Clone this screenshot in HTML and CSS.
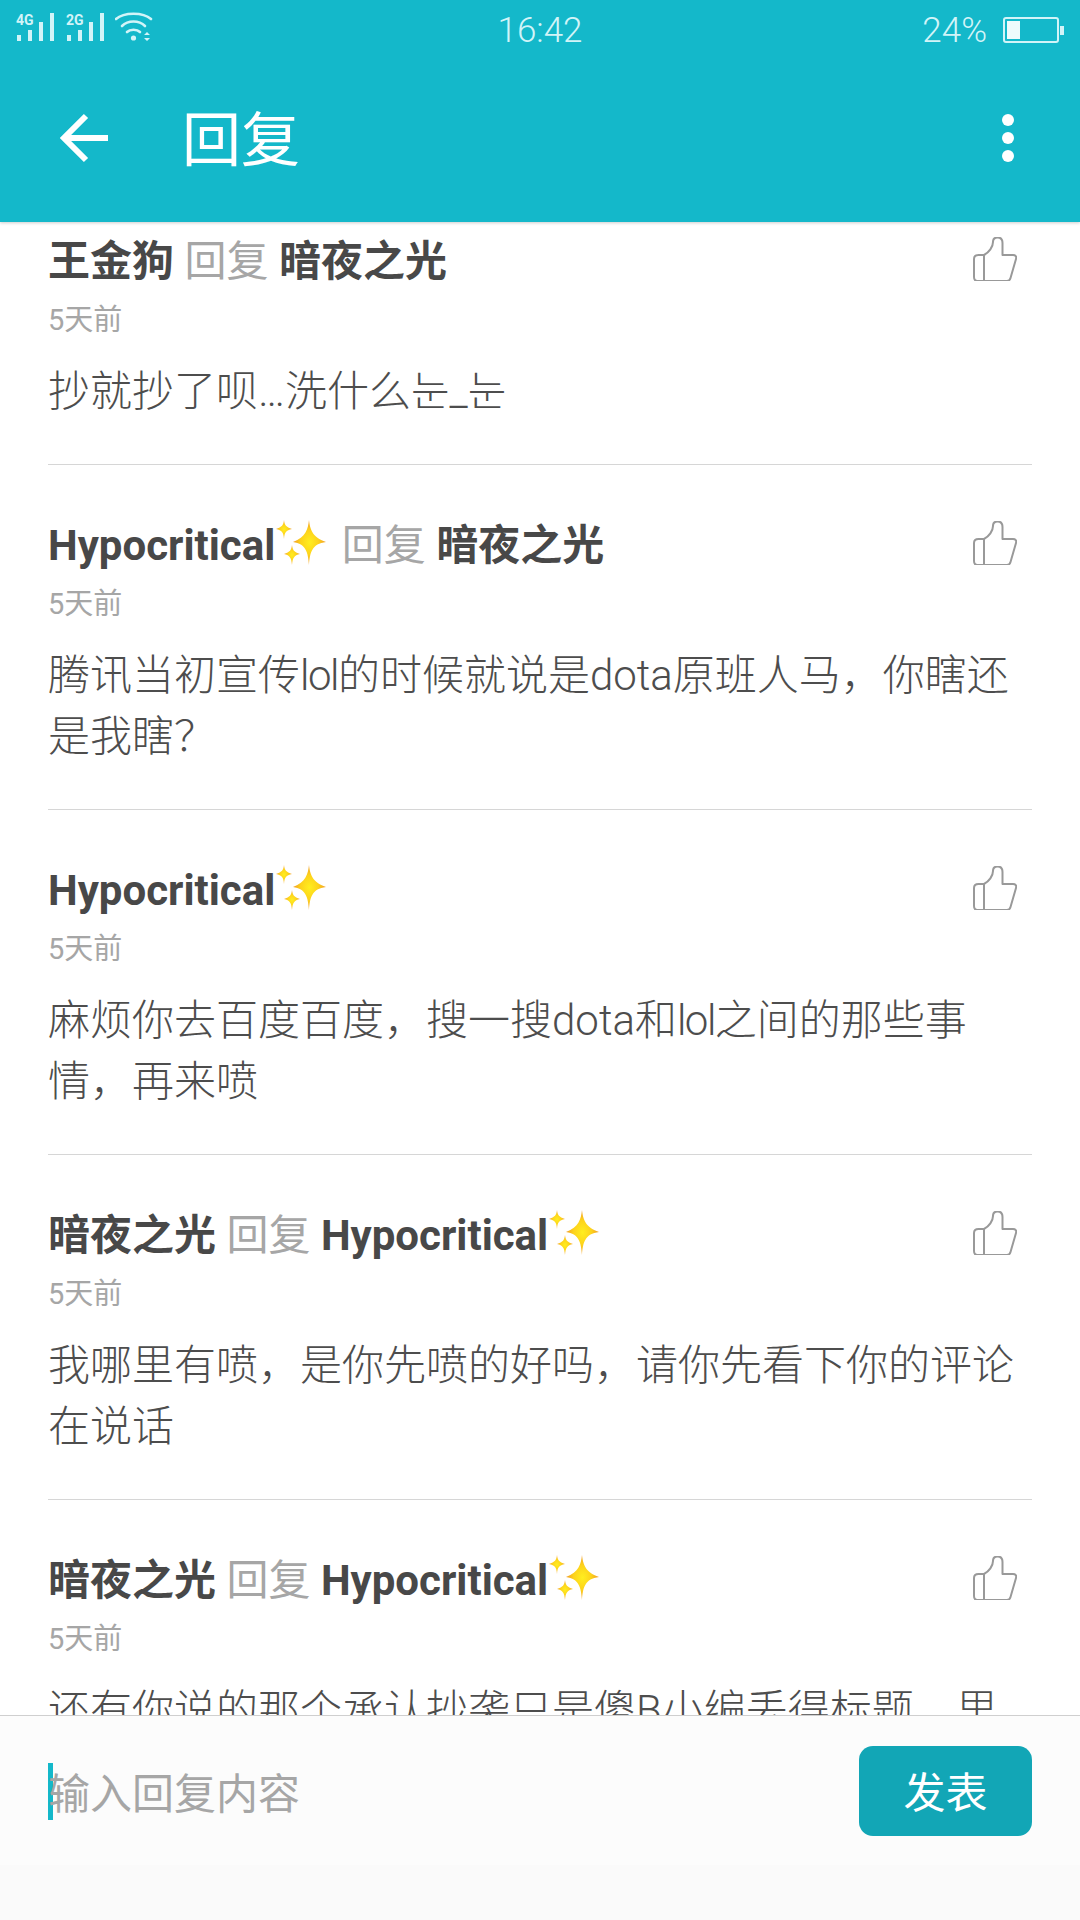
FILE: index.html
```html
<!DOCTYPE html>
<html>
	<head>
		<meta charset="UTF-8">
		<title>回复</title>
		<link rel="stylesheet" href="styles.css">
	</head>
	<body>
		<svg class="defs" width="0" height="0">
			<defs>
				<radialGradient id="gold">
					<stop offset="0" stop-color="#ffee1f"/>
					<stop offset="0.55" stop-color="#fdd21c"/>
					<stop offset="1" stop-color="#f09a24"/>
				</radialGradient>
				<symbol id="sparkle" viewBox="0 0 50 46">
					<path fill="url(#gold)" d="M33 0C34 9 36 17 50 22C36 24 34 32 33 45C32 32 30 24 17 22C30 17 32 9 33 0Z"/>
					<path fill="url(#gold)" d="M8 0C8.500 5 10 7 16 9C10 10.500 8.500 12 8 19C7.500 12 6 10.500 0 9C6 7 7.500 5 8 0Z"/>
					<path fill="url(#gold)" d="M16 25C16.600 30 18 32 24 34C18 35.500 16.600 38 16 45C15.400 38 14 35.500 8 34C14 32 15.400 30 16 25Z"/>
				</symbol>
				<symbol id="thumb" viewBox="0 0 44 44">
					<path fill="none" stroke="#999" stroke-width="2" stroke-linejoin="round" d="M11 18H5.500C3 18 1 19.500 1 22V40C1 42.500 2.500 44 4.500 44H34C36 44 37 43 37.500 41L43 22C43.800 19.500 42.500 18 40 18H29.500V6C29.500 2.500 27.500 0.500 24.500 0.500C21.500 0.500 20 2.500 20 5C20 10 16 15.500 11 18V44"/>
				</symbol>
			</defs>
		</svg>
		<div id="page">
			<div class="header">
				<div class="status">
					<div class="status-left">
						<span class="signal"><i class="net">4G</i>
							<svg width="38" height="28" viewBox="0 0 38 28"><path fill="#d2f4f8" d="M1 22h4v6H1zM12 17h4v11h-4zM23 9h4v19h-4zM34 0h4v28h-4z"/></svg>
						</span>
						<span class="signal"><i class="net">2G</i>
							<svg width="38" height="28" viewBox="0 0 38 28"><path fill="#d2f4f8" d="M1 22h4v6H1zM12 17h4v11h-4zM23 9h4v19h-4zM34 0h4v28h-4z"/></svg>
						</span>
						<svg class="wifi" width="38" height="30" viewBox="0 0 38 30">
							<g fill="none" stroke="#d2f4f8" stroke-width="2.600" stroke-linecap="round">
								<path d="M1 7C9 0 28 0 36 7"/>
								<path d="M7 14C13 8 24 8 30 14"/>
								<path d="M12 20C15 17 22 17 25 20"/>
							</g>
							<circle cx="18.500" cy="26" r="2.600" fill="#d2f4f8"/>
							<path fill="#d2f4f8" d="M32 20l3 3h-6zM32 29l3-3h-6z"/>
						</svg>
					</div>
					<div class="status-time">16:42</div>
					<div class="status-right">
						<span class="pct">24%</span>
						<span class="battery"><span class="battery-level"></span></span>
						<span class="battery-tip"></span>
					</div>
				</div>
				<div class="toolbar">
					<svg class="back" width="50" height="50" viewBox="0 0 50 50">
						<path fill="none" stroke="#fff" stroke-width="6" d="M26 3L4 25L26 47M6 25H48"/>
					</svg>
					<div class="title">回复</div>
					<div class="more"><i></i><i></i><i></i></div>
				</div>
			</div>

			<div class="list">
				<div class="comment">
					<div class="row">
						<div class="name">王金狗 <span class="reply">回复</span> 暗夜之光</div>
						<svg class="like"><use href="#thumb"/></svg>
					</div>
					<div class="time">5天前</div>
					<div class="body">抄就抄了呗…洗什么눈_눈</div>
				</div>
				<div class="comment">
					<div class="row">
						<div class="name">Hypocritical<svg class="spark"><use href="#sparkle"/></svg> <span class="reply">回复</span> 暗夜之光</div>
						<svg class="like"><use href="#thumb"/></svg>
					</div>
					<div class="time">5天前</div>
					<div class="body">腾讯当初宣传<span class="lol">lol</span>的时候就说是dota原班人马，你瞎还是我瞎？</div>
				</div>
				<div class="comment">
					<div class="row">
						<div class="name">Hypocritical<svg class="spark"><use href="#sparkle"/></svg></div>
						<svg class="like"><use href="#thumb"/></svg>
					</div>
					<div class="time">5天前</div>
					<div class="body">麻烦你去百度百度，搜一搜dota和<span class="lol">lol</span>之间的那些事情，再来喷</div>
				</div>
				<div class="comment">
					<div class="row">
						<div class="name">暗夜之光 <span class="reply">回复</span> Hypocritical<svg class="spark"><use href="#sparkle"/></svg></div>
						<svg class="like"><use href="#thumb"/></svg>
					</div>
					<div class="time">5天前</div>
					<div class="body">我哪里有喷，是你先喷的好吗，请你先看下你的评论在说话</div>
				</div>
				<div class="comment">
					<div class="row">
						<div class="name">暗夜之光 <span class="reply">回复</span> Hypocritical<svg class="spark"><use href="#sparkle"/></svg></div>
						<svg class="like"><use href="#thumb"/></svg>
					</div>
					<div class="time">5天前</div>
					<div class="body">还有你说的那个承认抄袭只是傻B小编丢得标题，里面的内容你看了吗</div>
				</div>
			</div>

			<div class="footer">
				<div class="input-bar">
					<div class="input">
						<span class="caret"></span>
						<span class="placeholder">输入回复内容</span>
					</div>
					<div class="send">发表</div>
				</div>
				<div class="nav-space"></div>
			</div>
		</div>
	</body>
</html>
```
FILE: styles.css
```css
*{margin: 0;padding: 0;box-sizing: border-box;}
html,body{width: 1080px;height: 1920px;overflow: hidden;}
body{background: #fff;font-family: Roboto,"Noto Sans CJK SC",sans-serif;}
i{font-style: normal;}
.defs{position: absolute;}
#page{
	width: 1080px;
	height: 1920px;
	display: flex;
	flex-direction: column;
}
.header{
	height: 222px;
	flex-shrink: 0;
	background: #14b8ca;
	box-shadow: 0 1px 3px rgba(0,0,0,0.2);
	position: relative;
	z-index: 2;
}
.status{
	height: 60px;
	display: grid;
	grid-template-columns: 1fr auto 1fr;
	align-items: center;
	color: #d2f4f8;
}
.status-left{
	display: flex;
	align-items: flex-start;
	padding: 13px 0 0 16px;
	height: 60px;
}
.signal{
	width: 38px;
	height: 28px;
	margin-right: 12px;
	position: relative;
	display: block;
}
.signal svg{display: block;}
.net{
	position: absolute;
	left: 0;
	top: 0;
	font-size: 14px;
	line-height: 14px;
	font-weight: 700;
}
.wifi{display: block;margin-left: -1px;margin-top: -1px;}
.status-time{
	font-size: 35px;
	font-weight: 300;
	text-align: center;
}
.status-right{
	display: flex;
	align-items: center;
	justify-content: flex-end;
	padding-right: 16px;
}
.pct{
	font-size: 35px;
	font-weight: 300;
	margin-right: 16px;
}
.battery{
	width: 56px;
	height: 26px;
	border: 2px solid #d2f4f8;
	border-radius: 3px;
	padding: 2px;
	display: block;
}
.battery-level{
	display: block;
	width: 13px;
	height: 100%;
	background: #eefbfc;
}
.battery-tip{
	width: 4px;
	height: 9px;
	background: #d2f4f8;
	margin-left: 1px;
}
.toolbar{
	height: 162px;
	display: flex;
	align-items: center;
	padding-left: 60px;
	padding-right: 66px;
}
.back{
	display: block;
	width: 50px;
	height: 50px;
	margin-bottom: 6px;
}
.title{
	flex: 1;
	margin-left: 72px;
	font-size: 59px;
	line-height: 80px;
	color: #fff;
}
.more{margin-bottom: 6px;}
.more i{
	display: block;
	width: 12px;
	height: 12px;
	border-radius: 50%;
	background: #fff;
	margin: 6px 0;
}
.list{
	flex: 1;
	overflow: hidden;
	min-height: 0;
}
.comment{
	margin: 0 48px;
	padding: 50px 0 42px;
	border-bottom: 1px solid #d6d6d6;
}
.comment:first-child{margin-top: -41px;}
.row{
	height: 60px;
	display: flex;
	align-items: center;
	justify-content: space-between;
}
.name{
	margin-top: 2px;
	font-size: 42px;
	line-height: 60px;
	font-weight: 700;
	color: #484848;
	white-space: nowrap;
}
.reply{
	font-weight: 400;
	color: #a6a6a6;
}
.spark{
	width: 50px;
	height: 46px;
	margin-left: 1px;
	margin-right: 5px;
	vertical-align: -6px;
}
.like{
	width: 44px;
	height: 44px;
	margin-right: 15px;
	margin-bottom: 4px;
	overflow: visible;
}
.time{
	margin-top: 9px;
	height: 40px;
	font-size: 29px;
	line-height: 40px;
	color: #a6a6a6;
}
.body{
	margin-top: 21px;
	font-size: 42px;
	font-weight: 300;
	line-height: 61px;
	color: #4d4d4d;
}
.lol{letter-spacing: -1.5px;}
.footer{
	height: 205px;
	flex-shrink: 0;
	background: #fafafa;
	border-top: 1px solid #cfcfcf;
	position: relative;
	z-index: 2;
}
.input-bar{
	height: 149px;
	background: #fcfcfc;
	display: flex;
	align-items: center;
	justify-content: space-between;
	padding: 30px 48px 29px;
}
.input{
	display: flex;
	align-items: center;
}
.caret{
	width: 5px;
	height: 57px;
	background: #14b8ca;
	margin-right: -5px;
}
.placeholder{
	margin-top: 7px;
	font-size: 42px;
	line-height: 60px;
	color: #a6a6a6;
}
.send{
	width: 173px;
	height: 90px;
	border-radius: 14px;
	background: #12a6b6;
	color: #fff;
	font-size: 42px;
	line-height: 96px;
	text-align: center;
}
.nav-space{height: 55px;}
```
